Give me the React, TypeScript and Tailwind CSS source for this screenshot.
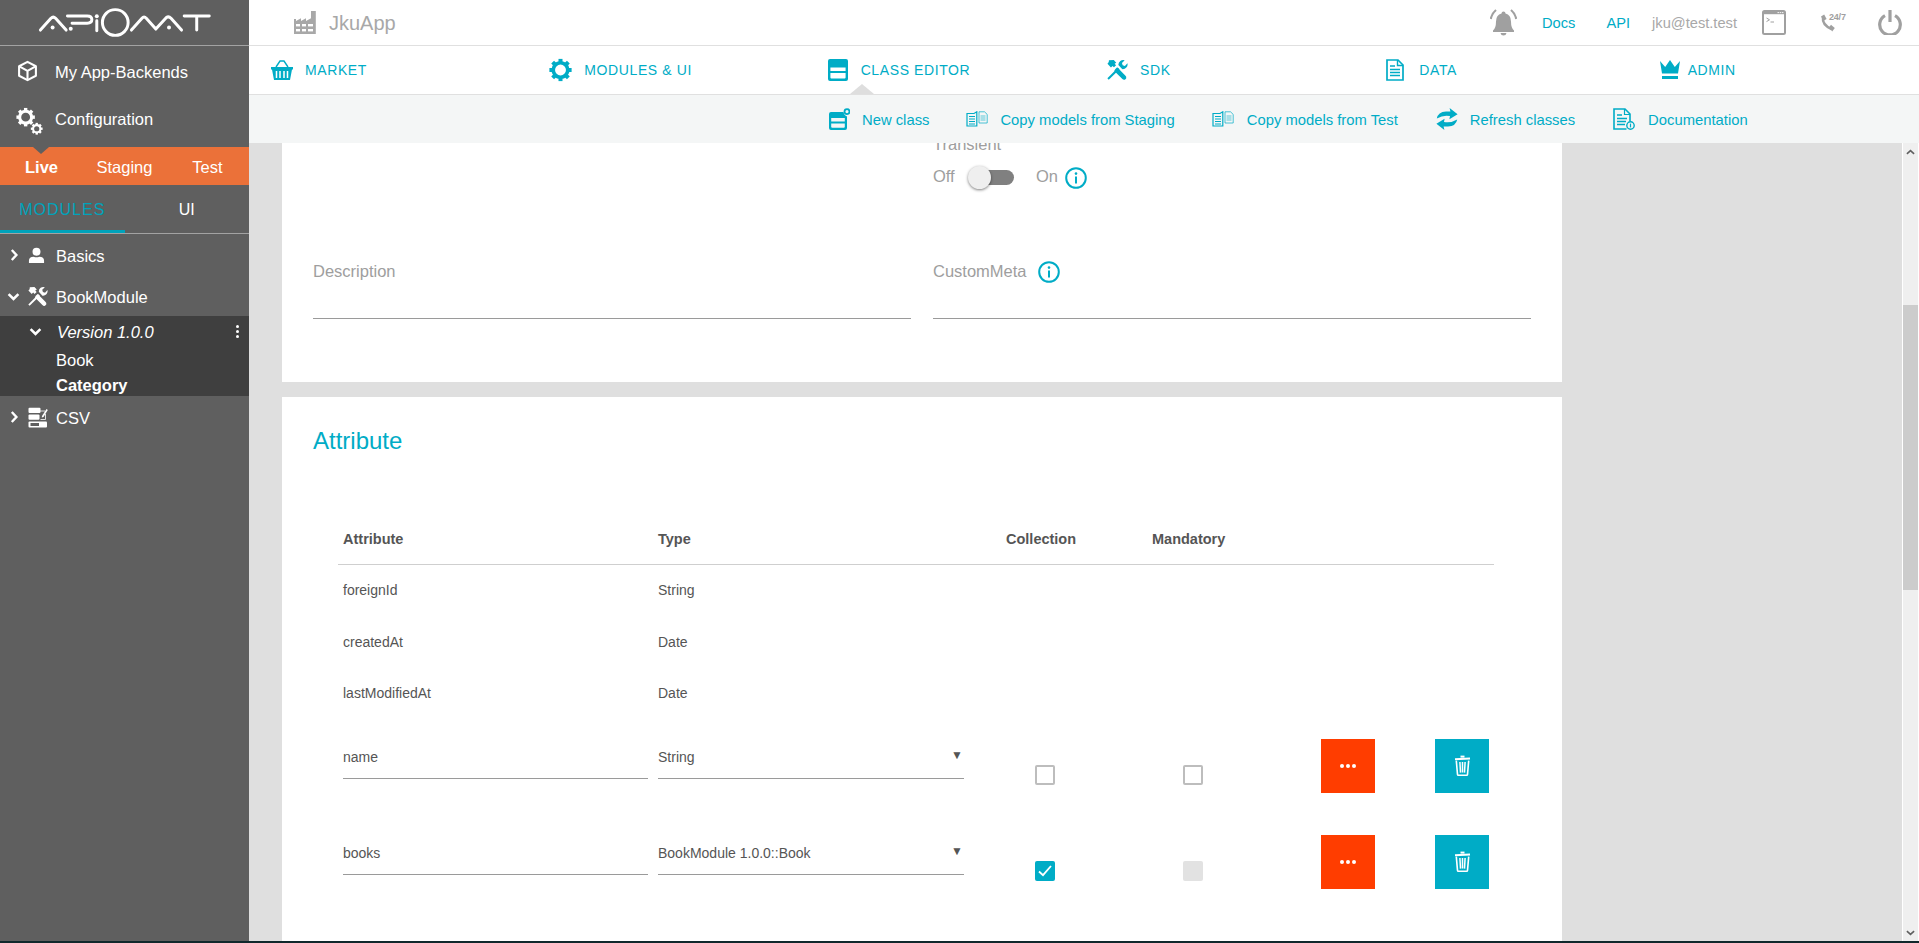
import React from "react";

const T = "text-[#00acc6]";

function Logo() {
  return (
    <svg viewBox="108 18 526 94" className="w-[175px] h-[31px] text-white" fill="none" stroke="currentColor" strokeWidth="9" strokeLinecap="round" strokeLinejoin="round">
      <path d="M116 88 L148 52 Q155 45 162 52 L194 88" />
      <circle cx="153" cy="80" r="6" fill="currentColor" stroke="none" />
      <path d="M198 45 H258 Q272 45 272 56 Q272 67 258 67 H212" />
      <circle cx="208" cy="84" r="6" fill="currentColor" stroke="none" />
      <circle cx="287" cy="46" r="6" fill="currentColor" stroke="none" />
      <path d="M287 60 V90" />
      <circle cx="343" cy="65" r="39" />
      <path d="M392 88 L424 52 Q430 45 437 52 L466 85 L498 50 Q505 45 512 52 L544 88" />
      <circle cx="506" cy="80" r="6" fill="currentColor" stroke="none" />
      <path d="M552 45 H628 M590 45 V88" />
    </svg>
  );
}

function Cube({ className = "" }: { className?: string }) {
  return (
    <svg viewBox="0 0 22 22" className={className} fill="none" stroke="currentColor" strokeWidth="2.2" strokeLinejoin="round">
      <path d="M11 1.5 L19.8 6 V16 L11 20.5 L2.2 16 V6 Z" />
      <path d="M2.5 6.2 L11 10.8 L19.5 6.2 M11 10.8 V20" />
    </svg>
  );
}

function Gear({ cx, cy, r, w }: { cx: number; cy: number; r: number; w: number }) {
  const teeth = Array.from({ length: 8 }, (_, i) => i * 45);
  return (
    <g>
      <circle cx={cx} cy={cy} r={r} fill="none" stroke="currentColor" strokeWidth={w} />
      {teeth.map((a) => (
        <rect key={a} x={cx - w * 0.55} y={cy - r - w * 1.05} width={w * 1.1} height={w} fill="currentColor" transform={`rotate(${a} ${cx} ${cy})`} />
      ))}
    </g>
  );
}

function Tools({ className = "" }: { className?: string }) {
  return (
    <svg viewBox="0 0 24 24" className={className} fill="currentColor">
      <path d="M3 22.5 L1.5 21 L13 9.5 L14.8 11.2 Z" />
      <path d="M13.5 6.5 A5.2 5.2 0 0 1 20.4 1.4 L17.4 4.4 L18.2 6.8 L20.6 7.6 L23.4 4.7 A5.2 5.2 0 0 1 17.6 11 Z" />
      <path d="M3.2 1.4 L8.5 1.2 L11.2 4 L9.4 5.2 L11 6.8 L8.7 9.1 L7.1 7.5 L5.4 9.2 L1.6 5.2 Q3.6 4 3.2 1.4 Z" />
      <path d="M10 11.2 L12.2 9 L21 18 A2.9 2.9 0 0 1 22 21.2 L20.6 22.6 A2.9 2.9 0 0 1 17.6 21.6 L9 13 Z" />
    </svg>
  );
}

function Person({ className = "" }: { className?: string }) {
  return (
    <svg viewBox="0 0 18 18" className={className} fill="currentColor">
      <circle cx="9" cy="5" r="4.2" />
      <path d="M1 17 V14.5 Q1 10.5 6 10.3 Q9 11.5 12 10.3 Q17 10.5 17 14.5 V17 Z" />
    </svg>
  );
}

function CsvIcon({ className = "" }: { className?: string }) {
  return (
    <svg viewBox="0 0 20 21" className={className} fill="currentColor">
      <rect x="0.5" y="0.8" width="12" height="5.2" rx="1" />
      <rect x="0.5" y="7.5" width="11" height="5.2" rx="1" />
      <path d="M14 9 L18.5 2 L19.8 3 L15.5 10 L13.8 10.6 Z" />
      <path d="M12 4 H17 M17.5 7 V12.5 H12.5" fill="none" stroke="currentColor" strokeWidth="0.8" />
      <rect x="0.5" y="14.6" width="18.5" height="5.8" rx="1" />
      <path d="M2.5 16 H11 V19 H2.5 Z M13 15 V20" fill="#5f5f5f" />
    </svg>
  );
}

function Chevron({ down, className = "" }: { down?: boolean; className?: string }) {
  return (
    <svg viewBox="0 0 12 12" className={className} fill="none" stroke="currentColor" strokeWidth="2.4">
      {down ? <path d="M1.5 3.8 L6 8.2 L10.5 3.8" /> : <path d="M3.8 1 L8.4 6 L3.8 11" />}
    </svg>
  );
}

function Factory({ className = "" }: { className?: string }) {
  return (
    <svg viewBox="0 0 22 23" className={className} fill="currentColor">
      <path d="M17 0 H21.8 V23 H0 V8 H2 V10 L7 7.2 V10 L12 7.2 V10 L17 7.2 Z" />
      <g fill="#fff">
        <rect x="2" y="13" width="4" height="2.4" />
        <rect x="8" y="13" width="4" height="2.4" />
        <rect x="14" y="13" width="5" height="2.4" />
        <rect x="2" y="18" width="4" height="2.4" />
        <rect x="8" y="18" width="4" height="2.4" />
        <rect x="14" y="18" width="5" height="2.4" />
      </g>
    </svg>
  );
}

function Bell({ className = "" }: { className?: string }) {
  return (
    <svg viewBox="0 0 27 27" className={className} fill="currentColor">
      <path d="M13.5 2.5 Q15.5 2.5 15.5 4.6 Q21 6 21 12.5 Q21 19 24 21.5 V23 H3 V21.5 Q6 19 6 12.5 Q6 6 11.5 4.6 Q11.5 2.5 13.5 2.5 Z" />
      <path d="M10.5 24 H16.5 Q16 26.5 13.5 26.5 Q11 26.5 10.5 24 Z" />
      <path d="M6 1 Q1.8 4.5 0.8 10 M21 1 Q25.2 4.5 26.2 10" fill="none" stroke="currentColor" strokeWidth="2.2" />
    </svg>
  );
}

function Terminal({ className = "" }: { className?: string }) {
  return (
    <svg viewBox="0 0 24 25" className={className} fill="none">
      <rect x="1" y="1" width="22" height="23" rx="1.5" stroke="currentColor" strokeWidth="2" />
      <rect x="1" y="1" width="22" height="3.2" fill="currentColor" />
      <path d="M15.5 2.6 H21.5" stroke="#fff" strokeWidth="0.9" strokeDasharray="1.5 0.7" />
      <path d="M4.5 8 L7.5 9.8 L4.5 11.6 M8.5 12 H12" stroke="currentColor" strokeWidth="1" />
    </svg>
  );
}

function Phone({ className = "" }: { className?: string }) {
  return (
    <svg viewBox="0 0 15 18" className={className} fill="currentColor">
      <path d="M3 3 Q2 11 11.5 15" fill="none" stroke="currentColor" strokeWidth="2.6" />
      <path d="M1 2.5 L4.2 0.5 L6.6 5 L3.6 6.8 Z" />
      <path d="M9 13.6 L11 10.8 L14.8 14 L12.2 17.4 Z" />
    </svg>
  );
}

function Power({ className = "" }: { className?: string }) {
  return (
    <svg viewBox="0 0 24 25" className={className} fill="none" stroke="currentColor" strokeWidth="3.2">
      <path d="M7 5.6 A10.3 10.3 0 1 0 17 5.6" />
      <path d="M12 0 V12" />
    </svg>
  );
}

function Basket({ className = "" }: { className?: string }) {
  return (
    <svg viewBox="0 0 22 20" className={className} fill="currentColor">
      <path d="M5 7 L9 1 H13 L17 7" fill="none" stroke="currentColor" strokeWidth="1.4" />
      <path d="M0 7 H22 V9.4 H21 L19 20 H3 L1 9.4 H0 Z" />
      <path d="M5.5 11 V18 M9 11 V18 M13 11 V18 M16.5 11 V18" stroke="#fff" strokeWidth="1.5" />
    </svg>
  );
}

function BigGear({ className = "" }: { className?: string }) {
  return (
    <svg viewBox="0 0 24 24" className={className}>
      <Gear cx={12} cy={12} r={7.6} w={3.8} />
    </svg>
  );
}

function ClassIcon({ className = "" }: { className?: string }) {
  return (
    <svg viewBox="0 0 20 22" className={className} fill="currentColor">
      <path fillRule="evenodd" d="M2 0 H18 Q20 0 20 2 V20 Q20 22 18 22 H2 Q0 22 0 20 V2 Q0 0 2 0 Z M2.4 8.6 V12 H17.6 V8.6 Z M2.4 14 V18.6 Q2.4 19.6 3.4 19.6 H16.6 Q17.6 19.6 17.6 18.6 V14 Z" />
    </svg>
  );
}

function NewClassIcon({ className = "" }: { className?: string }) {
  return (
    <svg viewBox="0 0 21 22" className={className} fill="currentColor">
      <path fillRule="evenodd" d="M2 4 H14.5 Q15 7.5 18 8.4 V20 Q18 22 16 22 H2 Q0 22 0 20 V6 Q0 4 2 4 Z M2.2 10 V13.4 H15.8 V10 Z M2.2 15.4 V18.8 Q2.2 19.8 3.2 19.8 H14.8 Q15.8 19.8 15.8 18.8 V15.4 Z" />
      <circle cx="18" cy="3.6" r="2.5" fill="none" stroke="currentColor" strokeWidth="1.8" />
    </svg>
  );
}

function CopyIcon({ className = "" }: { className?: string }) {
  return (
    <svg viewBox="0 0 22 16" className={className} fill="none" stroke="currentColor">
      <path d="M1 2.5 H8 L10.8 0.8 V15 H1 Z" strokeWidth="1.2" />
      <path d="M3 5.5 H9 M3 8 H9 M3 10.5 H9 M3 13 H9" strokeWidth="1" />
      <path d="M13 0.8 H18.5 L21.2 3.4 V12 H13 Z" strokeWidth="1" opacity="0.7" />
      <path d="M14.5 5 H19.5 M14.5 7 H19.5 M14.5 9 H19.5" strokeWidth="0.9" opacity="0.7" />
    </svg>
  );
}

function RefreshIcon({ className = "" }: { className?: string }) {
  return (
    <svg viewBox="0 0 22 22" className={className} fill="currentColor">
      <path d="M0.8 10.5 Q2 3.8 10 3.4 L14.4 3.4 L13.6 0 L21.6 6.2 L13.4 11.2 L14 8 Q7.4 6.6 0.8 10.5 Z" />
      <path d="M21.2 11.5 Q20 18.2 12 18.6 L7.6 18.6 L8.4 22 L0.4 15.8 L8.6 10.8 L8 14 Q14.6 15.4 21.2 11.5 Z" />
    </svg>
  );
}

function DataIcon({ className = "" }: { className?: string }) {
  return (
    <svg viewBox="0 0 18 22" className={className} fill="none" stroke="currentColor">
      <path d="M1 1 H12 L17 6 V21 H1 Z" strokeWidth="1.7" />
      <path d="M11.5 1 V6.5 H17" strokeWidth="1.4" />
      <path d="M4 7 H9 M4 10.5 H14 M4 13.5 H14 M4 16.5 H14" strokeWidth="1.6" />
    </svg>
  );
}

function Crown({ className = "" }: { className?: string }) {
  return (
    <svg viewBox="0 0 20 20" className={className} fill="currentColor">
      <path d="M0 1 L5.2 7 L10 0 L14.8 7 L20 1 L18 13.5 H2 Z" />
      <rect x="2" y="16" width="16" height="3" />
    </svg>
  );
}

function DocIcon({ className = "" }: { className?: string }) {
  return (
    <svg viewBox="0 0 22 22" className={className} fill="none" stroke="currentColor">
      <path d="M13.5 21 H1 V1 H12 L17 6 V13" strokeWidth="1.6" />
      <path d="M11.5 1 V6.5 H17" strokeWidth="1.2" />
      <path d="M4 7 H9 M4 10.5 H14 M4 13.5 H13 M4 16.5 H12" strokeWidth="1.5" />
      <circle cx="17.5" cy="17.5" r="3.7" strokeWidth="1.4" />
      <path d="M17.5 15.6 V19.4" strokeWidth="1.2" />
    </svg>
  );
}

function Info({ className = "" }: { className?: string }) {
  return (
    <svg viewBox="0 0 22 22" className={`text-[#00acc6] ${className}`} fill="none" stroke="currentColor">
      <circle cx="11" cy="11" r="9.8" strokeWidth="2" />
      <circle cx="11" cy="6.6" r="1.3" fill="currentColor" stroke="none" />
      <path d="M11 9.6 V16.4" strokeWidth="2" />
    </svg>
  );
}

function Trash({ className = "" }: { className?: string }) {
  return (
    <svg viewBox="0 0 16 21" className={className} fill="none" stroke="currentColor">
      <path d="M0.5 4.2 L15.5 3.6" strokeWidth="2" />
      <path d="M6 1.6 H10" strokeWidth="2" />
      <path d="M1.8 5.6 L3 19.4 Q3 20.2 4 20.2 H12 Q13 20.2 13 19.4 L14.2 5.6" strokeWidth="1.6" />
      <path d="M5.4 7 L6 17.6 M8 7 V17.6 M10.6 7 L10 17.6" strokeWidth="1.5" />
    </svg>
  );
}

function NavItem({ icon, label, gap }: { icon: React.ReactNode; label: string; gap: string }) {
  return (
    <div className="flex items-center pl-[22px]">
      {icon}
      <span className={`text-[14px] tracking-[0.6px] ${gap}`}>{label}</span>
    </div>
  );
}

function SubItem({ icon, label, gap, ml }: { icon: React.ReactNode; label: string; gap: string; ml: string }) {
  return (
    <div className={`flex items-center ${ml}`}>
      {icon}
      <span className={`text-[14.8px] pt-[2px] ${gap}`}>{label}</span>
    </div>
  );
}

function Field({ text, select }: { text: string; select?: boolean }) {
  return (
    <div className={`mt-[6px] h-[34px] border-b border-[#9a9a9a] flex items-start pt-[1px] text-[14px] text-[#555555] leading-[22px] ${select ? "w-[306px]" : "w-[305px] ml-[5px]"}`}>
      <span>{text}</span>
      {select && <span className="ml-auto mr-[1px] -mt-[1px] text-[12px] leading-[20px] text-[#555555]">▼</span>}
    </div>
  );
}

function Check({ state, ml }: { state: "off" | "on" | "disabled"; ml: string }) {
  if (state === "on")
    return (
      <div className={`mt-[26px] w-[20px] h-[20px] rounded-[2px] bg-[#00acc6] flex items-center justify-center ${ml}`}>
        <svg viewBox="0 0 14 12" className="w-[14px] h-[12px]" fill="none" stroke="#fff" strokeWidth="1.8">
          <path d="M1 6.5 L5 10.2 L13 1" />
        </svg>
      </div>
    );
  if (state === "disabled") return <div className={`mt-[26px] w-[20px] h-[20px] rounded-[2px] bg-[#e2e2e2] ${ml}`} />;
  return <div className={`mt-[26px] w-[20px] h-[20px] rounded-[2px] border-2 border-[#bdbdbd] ${ml}`} />;
}

function EditRow({ name, type, collection, mandatory, cls }: { name: string; type: string; collection: "off" | "on"; mandatory: "off" | "disabled"; cls: string }) {
  return (
    <div className={`grid grid-cols-[320px_348px_146px_169px_114px_54px] h-[54px] ${cls}`}>
      <Field text={name} />
      <Field text={type} select />
      <Check state={collection} ml="ml-[29px]" />
      <Check state={mandatory} ml="ml-[31px]" />
      <div className="w-[54px] h-[54px] bg-[#ff3d00] flex items-center justify-center gap-[2px]">
        <span className="w-[4px] h-[4px] rounded-full bg-white" />
        <span className="w-[4px] h-[4px] rounded-full bg-white" />
        <span className="w-[4px] h-[4px] rounded-full bg-white" />
      </div>
      <div className="w-[54px] h-[54px] bg-[#00acc6] flex items-center justify-center text-white">
        <Trash className="w-[17px] h-[21px] -mt-[2px]" />
      </div>
    </div>
  );
}

function ReadRow({ name, type, h }: { name: string; type: string; h: string }) {
  return (
    <div className={`grid grid-cols-[320px_1fr] items-center text-[14px] text-[#555555] ${h}`}>
      <span className="pl-[5px]">{name}</span>
      <span>{type}</span>
    </div>
  );
}

export default function App() {
  return (
    <div className="w-[1919px] h-[943px] overflow-hidden flex flex-col font-['Liberation_Sans',Arial,sans-serif] bg-[#dfdfdf]">
      <div className="flex flex-1 min-h-0">
        {/* Sidebar */}
        <aside className="w-[249px] shrink-0 bg-[#5f5f5f] text-white flex flex-col text-[16.5px]">
          <div className="h-[46px] border-b border-[#a3a3a3] flex items-center justify-center pr-[1px]">
            <Logo />
          </div>
          <div className="h-[50px] flex items-center">
            <Cube className="w-[21px] h-[22px] ml-[17px]" />
            <span className="ml-[17px] pt-[2px]">My App-Backends</span>
          </div>
          <div className="h-[51px] flex items-center pb-[6px]">
            <svg viewBox="0 0 28 29" className="w-[27px] h-[29px] ml-[16px] mt-[6px]">
              <Gear cx={10} cy={10} r={6.2} w={3.2} />
              <Gear cx={21.5} cy={22} r={3.8} w={2.2} />
            </svg>
            <span className="ml-[12px] pt-[1px]">Configuration</span>
          </div>
          <div className="relative h-[38px] bg-[#eb7139] grid grid-cols-3 items-center text-center pt-[2px]">
            <span className="absolute left-[33px] top-0 w-0 h-0 border-l-[8px] border-r-[8px] border-t-[7px] border-l-transparent border-r-transparent border-t-[#5f5f5f]" />
            <span className="font-bold">Live</span>
            <span>Staging</span>
            <span>Test</span>
          </div>
          <div className="h-[48px] grid grid-cols-2 text-center text-[16px]">
            <div className="border-b-[3px] border-[#00a3bb] text-[#00a3bb] tracking-[1px] flex items-center justify-center pt-[5px]">MODULES</div>
            <div className="flex items-center justify-center pt-[2px]">UI</div>
          </div>
          <div className="h-[1px] bg-[#a3a3a3]" />
          <div className="h-[42px] flex items-center">
            <Chevron className="w-[12px] h-[12px] ml-[8px]" />
            <Person className="w-[17px] h-[17px] ml-[8px]" />
            <span className="ml-[11px] pt-[2px]">Basics</span>
          </div>
          <div className="h-[40px] flex items-center">
            <Chevron down className="w-[13px] h-[13px] ml-[7px]" />
            <Tools className="w-[21px] h-[21px] ml-[7px]" />
            <span className="ml-[8px] pt-[2px]">BookModule</span>
          </div>
          <div className="h-[80px] bg-[#3f3f3f] flex flex-col">
            <div className="h-[30px] flex items-center">
              <Chevron down className="w-[13px] h-[13px] ml-[29px]" />
              <span className="ml-[15px] italic pt-[2px]">Version 1.0.0</span>
              <span className="ml-auto mr-[10px] flex flex-col gap-[2px]">
                <span className="w-[3px] h-[3px] bg-white rounded-full" />
                <span className="w-[3px] h-[3px] bg-white rounded-full" />
                <span className="w-[3px] h-[3px] bg-white rounded-full" />
              </span>
            </div>
            <div className="h-[26px] flex items-center pl-[56px] pt-[2px]">Book</div>
            <div className="h-[24px] flex items-center pl-[56px] pt-[2px] font-bold">Category</div>
          </div>
          <div className="h-[42px] flex items-center">
            <Chevron className="w-[12px] h-[12px] ml-[8px]" />
            <CsvIcon className="w-[20px] h-[21px] ml-[8px]" />
            <span className="ml-[8px] pt-[2px]">CSV</span>
          </div>
        </aside>

        {/* Main */}
        <main className="flex-1 min-w-0 flex flex-col">
          <header className="h-[46px] bg-white border-b border-[#e0e0e0] flex items-center shrink-0">
            <Factory className="w-[22px] h-[23px] ml-[45px] text-[#a8a8a8]" />
            <span className="ml-[13px] text-[20px] text-[#a8a8a8]">JkuApp</span>
            <div className="ml-auto flex items-center text-[14.67px]">
              <Bell className="w-[27px] h-[27px] text-[#a0a0a0]" />
              <span className={`ml-[25px] ${T}`}>Docs</span>
              <span className={`ml-[31px] ${T}`}>API</span>
              <span className="ml-[22px] text-[#a8a8a8]">jku@test.test</span>
              <Terminal className="w-[24px] h-[25px] ml-[25px] text-[#a0a0a0]" />
              <div className="relative w-[25px] h-[18px] ml-[34px] mt-[1px] text-[#a0a0a0]">
                <Phone className="w-[15px] h-[18px]" />
                <span className="absolute left-[9px] -top-[2px] text-[9px] font-bold leading-[10px] tracking-[-0.2px]">24/7</span>
              </div>
              <Power className="w-[24px] h-[25px] ml-[33px] mr-[17px] text-[#a0a0a0]" />
            </div>
          </header>

          <nav className={`relative h-[49px] bg-white border-b border-[#e0e0e0] grid grid-cols-6 shrink-0 ${T}`}>
            <NavItem icon={<Basket className="w-[22px] h-[20px]" />} label="MARKET" gap="ml-[12px]" />
            <NavItem icon={<BigGear className="w-[23px] h-[24px]" />} label="MODULES & UI" gap="ml-[12px]" />
            <NavItem icon={<ClassIcon className="w-[20px] h-[22px]" />} label="CLASS EDITOR" gap="ml-[13px]" />
            <NavItem icon={<Tools className="w-[22px] h-[22px]" />} label="SDK" gap="ml-[12px]" />
            <NavItem icon={<DataIcon className="w-[18px] h-[22px] ml-[2px]" />} label="DATA" gap="ml-[15px]" />
            <NavItem icon={<Crown className="w-[20px] h-[20px] -ml-[3px]" />} label="ADMIN" gap="ml-[8px]" />
            <span className="absolute left-[601px] bottom-0 w-0 h-0 border-l-[12px] border-r-[12px] border-b-[10px] border-l-transparent border-r-transparent border-b-[#dedede]" />
          </nav>

          <div className={`h-[48px] bg-[#f4f6f6] flex items-center shrink-0 pl-[580px] ${T}`}>
            <SubItem icon={<NewClassIcon className="w-[21px] h-[22px]" />} label="New class" gap="ml-[12px]" ml="" />
            <SubItem icon={<CopyIcon className="w-[22px] h-[16px]" />} label="Copy models from Staging" gap="ml-[12px]" ml="ml-[37px]" />
            <SubItem icon={<CopyIcon className="w-[22px] h-[16px]" />} label="Copy models from Test" gap="ml-[13px]" ml="ml-[37px]" />
            <SubItem icon={<RefreshIcon className="w-[22px] h-[22px]" />} label="Refresh classes" gap="ml-[12px]" ml="ml-[38px]" />
            <SubItem icon={<DocIcon className="w-[22px] h-[22px]" />} label="Documentation" gap="ml-[13px]" ml="ml-[38px]" />
          </div>

          <div className="flex-1 min-h-0 flex">
            <div className="flex-1 min-w-0 overflow-hidden pl-[33px] bg-[#dfdfdf]">
              <div className="w-[1280px] -mt-[20px]">
                {/* Card 1 */}
                <section className="bg-white pl-[31px] pr-[31px] pt-[11px] pb-[63px] text-[16.5px] text-[#9e9e9e]">
                  <div className="grid grid-cols-[598px_598px] gap-x-[22px]">
                    <div />
                    <div>
                      <div className="h-[20px] leading-[20px]">Transient</div>
                      <div className="mt-[12px] h-[23px] flex items-center">
                        <span className="w-[22px] pb-[2px]">Off</span>
                        <span className="relative z-10 ml-[13px] w-[23px] h-[23px] rounded-full bg-[#efefef] shadow-[0_1px_3px_rgba(0,0,0,0.5)]" />
                        <span className="-ml-[17px] w-[40px] h-[15px] rounded-full bg-[#808080]" />
                        <span className="ml-[22px] w-[21px] pb-[2px]">On</span>
                        <Info className="w-[22px] h-[22px] ml-[8px]" />
                      </div>
                    </div>
                    <div className="mt-[72px]">
                      <div className="h-[20px] leading-[20px]">Description</div>
                      <div className="h-[38px] border-b border-[#9a9a9a]" />
                    </div>
                    <div className="mt-[72px]">
                      <div className="h-[20px] leading-[20px] flex items-center">
                        <span>CustomMeta</span>
                        <Info className="w-[22px] h-[22px] ml-[11px] mt-[1px]" />
                      </div>
                      <div className="h-[38px] border-b border-[#9a9a9a]" />
                    </div>
                  </div>
                </section>

                {/* Card 2 */}
                <section className="mt-[15px] bg-white pt-[29px] pb-[80px] pl-[56px]">
                  <h2 className={`-ml-[25px] text-[24px] leading-[30px] ${T}`}>Attribute</h2>
                  <div className="mt-[63px] w-[1156px]">
                    <div className="grid grid-cols-[320px_348px_146px_1fr] items-center h-[46px] border-b border-[#cfcfcf] pb-[3px] text-[14.5px] font-bold text-[#555555]">
                      <span className="pl-[5px]">Attribute</span>
                      <span>Type</span>
                      <span>Collection</span>
                      <span>Mandatory</span>
                    </div>
                    <ReadRow name="foreignId" type="String" h="h-[51px]" />
                    <ReadRow name="createdAt" type="Date" h="h-[52px]" />
                    <ReadRow name="lastModifiedAt" type="Date" h="h-[51px]" />
                    <EditRow name="name" type="String" collection="off" mandatory="off" cls="mt-[20px]" />
                    <EditRow name="books" type="BookModule 1.0.0::Book" collection="on" mandatory="disabled" cls="mt-[42px]" />
                  </div>
                </section>
              </div>
            </div>

            {/* Scrollbar */}
            <div className="w-[17px] shrink-0 bg-white pl-[1px] pr-[1px]">
              <div className="h-full bg-[#efefef] flex flex-col items-center">
                <svg viewBox="0 0 10 6" className="w-[9px] h-[6px] mt-[6px] shrink-0" fill="none" stroke="#606060" strokeWidth="1.8">
                  <path d="M1 5 L5 1.5 L9 5" />
                </svg>
                <div className="w-full h-[285px] bg-[#cccccc] mt-[150px] shrink-0" />
                <svg viewBox="0 0 10 6" className="w-[9px] h-[6px] mt-auto mb-[5px] shrink-0" fill="none" stroke="#606060" strokeWidth="1.8">
                  <path d="M1 1 L5 4.5 L9 1" />
                </svg>
              </div>
            </div>
          </div>
        </main>
      </div>
      <div className="h-[2px] bg-[#10282c] shrink-0" />
    </div>
  );
}
